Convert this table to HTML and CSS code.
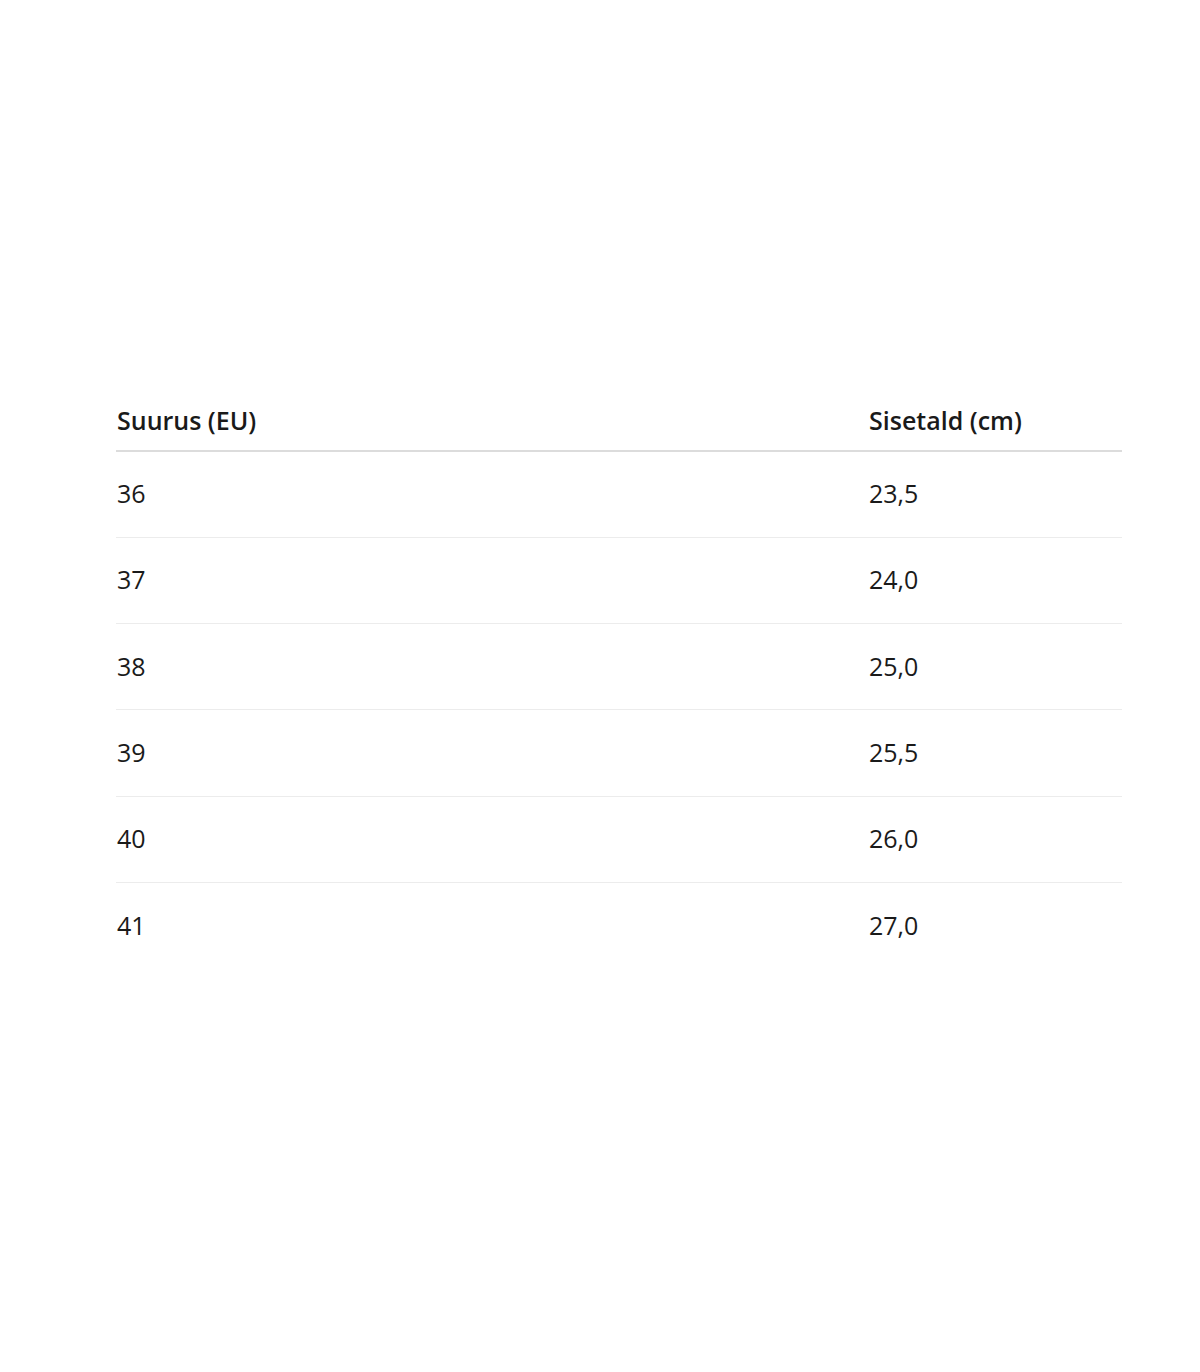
FILE: index.html
```html
<!DOCTYPE html>
<html lang="et">
<head>
<meta charset="utf-8">
<title>Suurustabel</title>
<link rel="stylesheet" href="styles.css">
</head>
<body>
<main class="page">
  <table class="size-table">
    <thead>
      <tr><th class="col-size">Suurus (EU)</th><th class="col-len">Sisetald (cm)</th></tr>
    </thead>
    <tbody>
      <tr><td>36</td><td>23,5</td></tr>
      <tr><td>37</td><td>24,0</td></tr>
      <tr><td>38</td><td>25,0</td></tr>
      <tr><td>39</td><td>25,5</td></tr>
      <tr><td>40</td><td>26,0</td></tr>
      <tr class="last"><td>41</td><td>27,0</td></tr>
    </tbody>
  </table>
</main>
</body>
</html>
```
FILE: styles.css
```css
html, body {
  margin: 0;
  padding: 0;
  background: #ffffff;
}
body {
  font-family: "Open Sans", "Noto Sans", "DejaVu Sans", sans-serif;
  color: #1a1a1a;
}
.page {
  padding: 391px 78px 0 116px;
  height: 981px;
}
.size-table {
  width: 1006px;
  border-collapse: collapse;
  table-layout: fixed;
}
.size-table th {
  text-align: left;
  font-size: 25px;
  font-weight: 600;
  height: 60px;
  padding: 0 0 2px 0;
  box-sizing: border-box;
  vertical-align: middle;
  border-bottom: 2px solid #dcdcdc;
  line-height: 1.2;
}
.size-table th:first-child,
.size-table td:first-child {
  padding-left: 1px;
}
.col-size { width: 753px; }
.col-len { width: 253px; }
.size-table td {
  font-size: 25px;
  font-weight: 400;
  height: 86.25px;
  padding: 0 0 2px 0;
  box-sizing: border-box;
  vertical-align: middle;
  border-bottom: 1px solid #ececec;
  line-height: 1.2;
}
.size-table tr.last td {
  border-bottom: none;
}
```
